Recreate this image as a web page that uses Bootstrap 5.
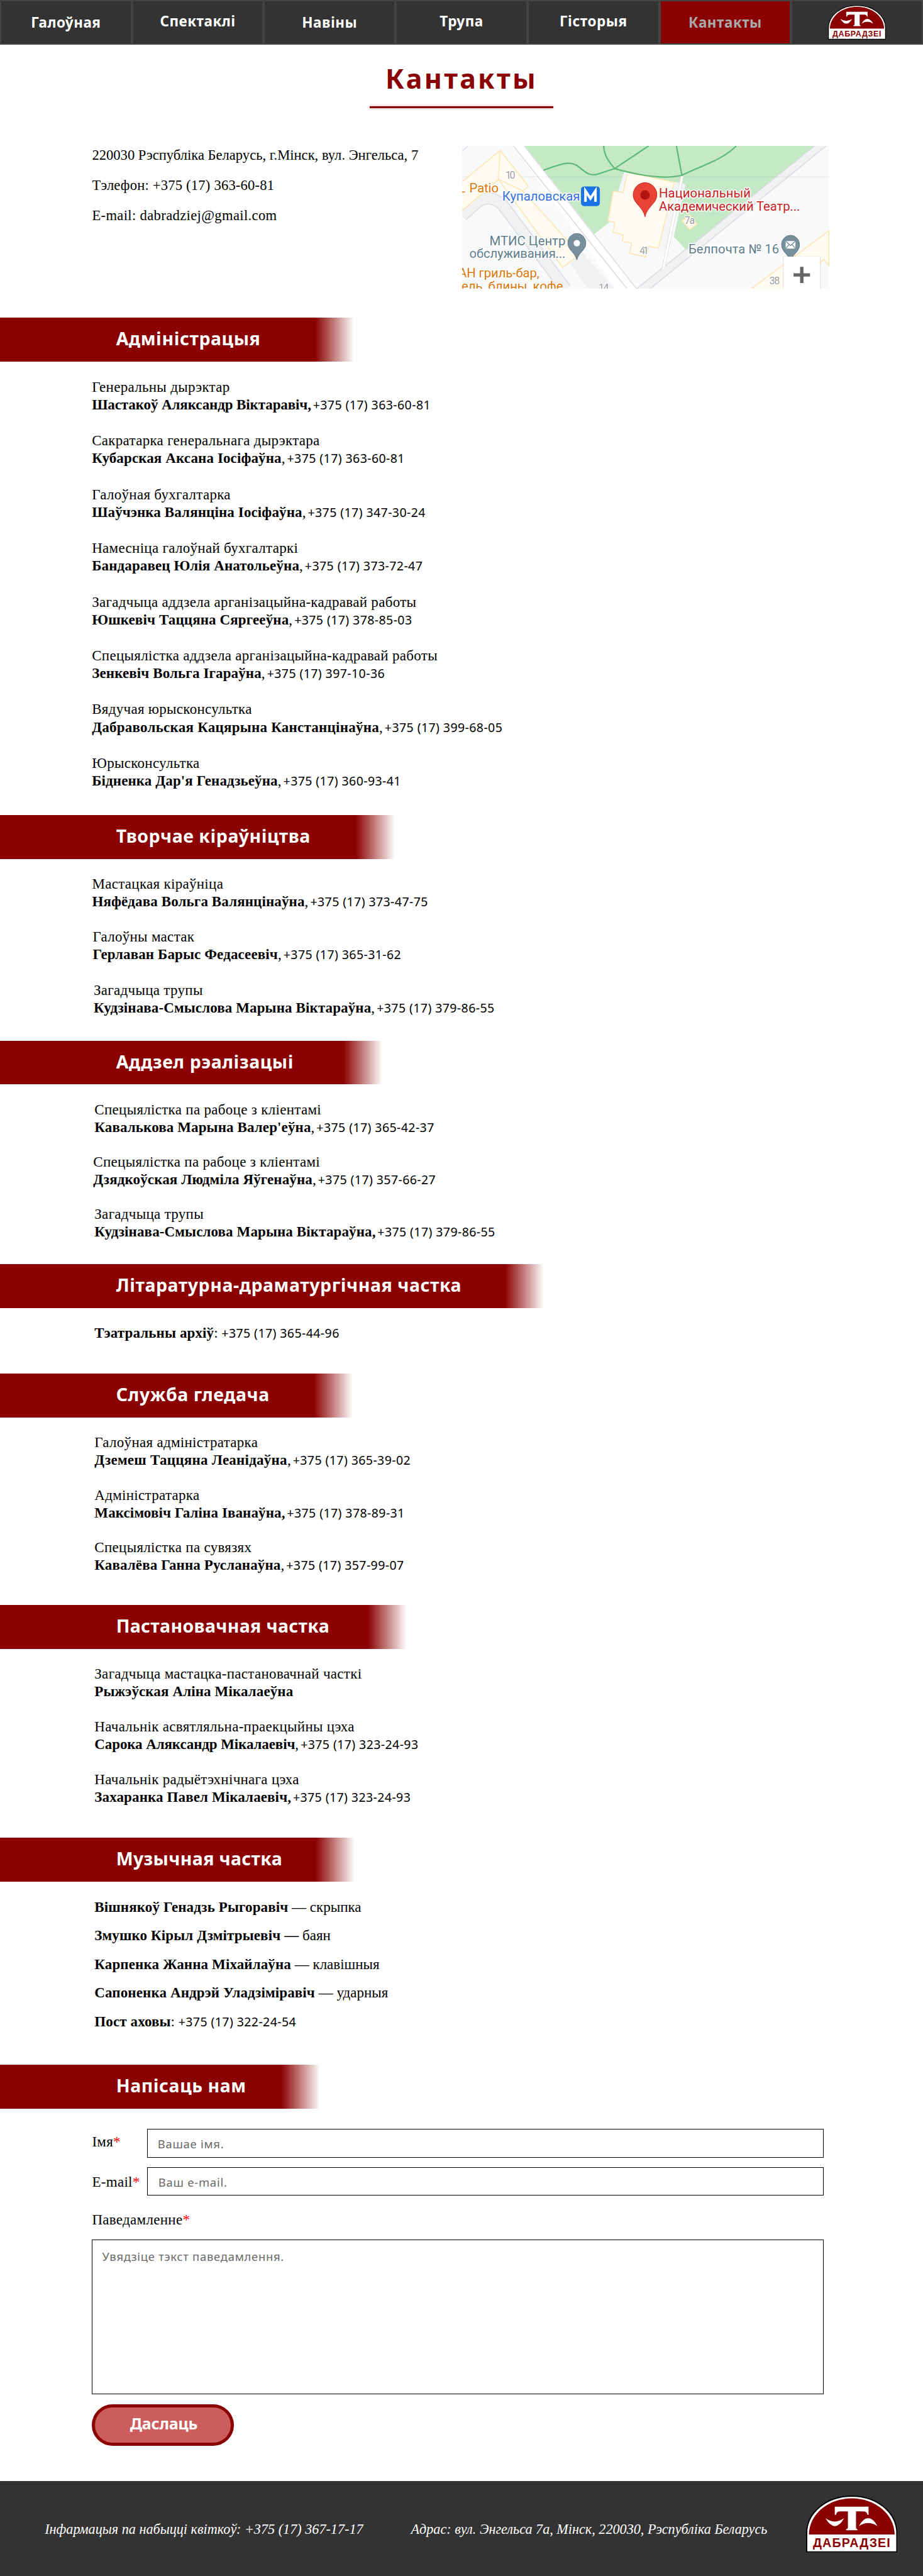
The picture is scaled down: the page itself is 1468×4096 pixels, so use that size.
<!DOCTYPE html>
<html lang="be">
<head>
<meta charset="utf-8">
<meta name="viewport" content="width=device-width, initial-scale=1">
<title>Кантакты</title>
<link href="https://cdn.jsdelivr.net/npm/bootstrap@5.3.0/dist/css/bootstrap.min.css" rel="stylesheet">
<style>
:root{--maroon:#8b0000;--ink:#333;--sans:"Noto Sans","Open Sans",sans-serif;--serif:"Liberation Serif",serif}
body{font-family:var(--serif);font-size:23px;line-height:28px;color:#000;background:#fff;overflow-x:hidden}
.site-nav{height:70.5px;background:#444}
.site-nav .nav-link{flex:1 1 0;min-width:0;height:70.5px;border:2px solid #444;border-radius:0;background:var(--ink);color:#fff;font:bold 22.5px/1 var(--sans);letter-spacing:.5px;padding:1px 0 0}
.site-nav .nav-link.raised{padding-bottom:2px;padding-top:0}
.site-nav .nav-link.active{background:var(--maroon);color:#a9a9a9}
.nav-logo{width:92px;height:55px;margin-left:-1px}
.page-title{font:bold 43px/60px var(--sans);letter-spacing:3.3px;color:var(--maroon);margin:24.8px 0 0}
.title-rule{width:292px;height:3px;margin:13.7px auto 0;background:var(--maroon);box-shadow:0 0 4px rgba(139,0,0,.45)}
.contact-row{margin-top:60px;height:227.1px;padding-left:146.4px}
.address{width:588.9px;padding-top:1px;gap:20.2px;font-size:22.6px}
.address .phone{letter-spacing:.2px}
.address .mail{letter-spacing:.35px}
.map{width:583.3px;height:227.1px}
.block{height:var(--h)}
.block-first{margin-top:46.3px}
.banner{width:var(--w);height:69.6px;padding-left:184.7px;margin:0;color:#fff;font:bold 28.5px/67px var(--sans);letter-spacing:.55px;background:linear-gradient(to right,var(--maroon) calc(100% - 62px),rgba(139,0,0,0))}
.people{padding:26.6px 0 0 var(--x,150.3px);gap:calc(var(--pitch) - 56.2px)}
.person{line-height:28.1px;letter-spacing:.3px;white-space:nowrap}
.person b,.line b{letter-spacing:.12px}
.person.snug b{letter-spacing:-.1px}
.person.loose b{letter-spacing:.25px}
.person .dept{display:block}
.tel{font-family:var(--sans);font-size:19.5px;letter-spacing:.42px}
.comma{margin-right:-3.3px}
.line{line-height:28px}
#admin{--w:563.4px;--h:790.6px;--pitch:85.5px;--x:146.2px}
#creative{--w:628px;--h:358.8px;--pitch:84.2px;--x:146.4px}
#sales{--w:607.5px;--h:355.2px;--pitch:83.1px}
#literary{--w:865.4px;--h:174px;--pitch:84px}
#audience{--w:560.5px;--h:368px;--pitch:83.4px}
#staging{--w:646.5px;--h:370.5px;--pitch:83.8px}
#music{--w:564.4px;--h:360.5px;--pitch:73.8px}
#staging .banner,#music .banner{letter-spacing:.35px}
#write{--w:509.3px}
#creative .person:nth-child(2){margin-left:1px}
#creative .person:nth-child(3){margin-left:2.6px}
#sales .person:nth-child(2){margin-left:-2px}
.write-form{width:1164.1px;margin-left:146.4px;padding-top:32.7px}
.write-form .form-label{font-size:23px;line-height:28px;letter-spacing:.3px;margin:0}
.write-form i{font-style:normal;color:red}
.write-form .form-control{border:1px solid #000;border-radius:0;font:18.4px/27px var(--sans);letter-spacing:.74px;padding:1px 16px 0}
.write-form .form-control::placeholder{color:#696969;opacity:1}
.short-label{width:87.4px;padding-top:6.8px}
.row-mail{margin-top:15.3px}
.row-mail .short-label{padding-top:9.3px}
.row-name .form-control{height:45.7px}
.row-mail .form-control{height:44.4px;padding-top:3px;padding-left:17px}
.message-label{margin-top:25.6px!important}
.write-form textarea.form-control{height:246.3px;margin-top:16.7px;padding:12.5px 15px;resize:none}
.btn-send{width:226px;height:65.7px;margin-top:15.9px;border:5.5px solid var(--maroon);border-radius:33px;background:#cd5c5c;color:#fff;font:bold 25px/1 var(--sans);letter-spacing:-.2px;padding:0 0 5px 2px}
.site-footer{height:151px;margin-top:56.1px;background:var(--ink);color:#fff;font-size:22.2px;font-style:italic;padding-left:71.2px}
.site-footer .info{width:582.3px}
.site-footer .info,.site-footer .addr{padding-top:3px}
.site-footer .addr{width:628.5px}
.foot-logo{width:145.4px;height:90.6px;margin-top:-14px}
</style>
<script src="https://cdn.jsdelivr.net/npm/bootstrap@5.3.0/dist/js/bootstrap.bundle.min.js"></script>
</head>
<body>
<svg width="0" height="0" class="d-none">
  <symbol id="logo" viewBox="80 80 452 281" preserveAspectRatio="none">
    <path d="M83 358V268C83 165 180 83 306 83S529 165 529 268V358Z" fill="#fff" stroke="#000" stroke-width="6"/>
    <path d="M94 272C96 172 190 94 306 94S516 172 518 272Z" fill="#8b0000"/>
    <path d="M222 135H389V175H384Q381 158 362 158H327V236Q327 246 334 246V251H278V246Q287 246 287 236V158H249Q231 158 228 175H222Z" fill="#fff"/>
    <path d="M176 192Q221 225 268 192Q247 231 222 231Q199 231 176 192Z" fill="#fff"/>
    <path d="M341 231Q363 192 387 192Q412 192 433 231Q387 200 341 231Z" fill="#fff"/>
    <text x="114" y="335" textLength="382" font-family="Liberation Sans" font-weight="bold" font-style="normal" font-size="61" fill="#8b0000">ДАБРАДЗЕІ</text>
  </symbol>
</svg>

<nav class="site-nav nav flex-nowrap">
  <a class="nav-link d-flex align-items-center justify-content-center">Галоўная</a>
  <a class="nav-link raised d-flex align-items-center justify-content-center">Спектаклі</a>
  <a class="nav-link d-flex align-items-center justify-content-center">Навіны</a>
  <a class="nav-link raised d-flex align-items-center justify-content-center">Трупа</a>
  <a class="nav-link raised d-flex align-items-center justify-content-center">Гісторыя</a>
  <a class="nav-link active d-flex align-items-center justify-content-center">Кантакты</a>
  <a class="nav-link d-flex align-items-center justify-content-center"><svg class="nav-logo"><use href="#logo"/></svg></a>
</nav>

<main>
  <h1 class="page-title text-center">Кантакты</h1>
  <div class="title-rule"></div>

  <div class="contact-row d-flex">
    <div class="address d-flex flex-column">
      <div>220030 Рэспубліка Беларусь, г.Мінск, вул. Энгельса, 7</div>
      <div class="phone">Тэлефон: +375 (17) 363-60-81</div>
      <div class="mail">E-mail: dabradziej@gmail.com</div>
    </div>
    <svg class="map" viewBox="0 0 603.6 235" preserveAspectRatio="none">
      <rect width="604" height="235" fill="#f8f9fb"/>
      <g transform="scale(.4968 .33333) translate(-42 -720)" fill="none" stroke-width="1.5">
        <g stroke="#dadce0">
          <path d="M42 745L62 720" vector-effect="non-scaling-stroke"/>
          <path d="M42 1065L95 995Q138 955 178 1015L385 1425" stroke="#dadce0" stroke-width="19" vector-effect="non-scaling-stroke"/>
          <path d="M42 1065L95 995Q138 955 178 1015L385 1425" stroke="#f0f1f3" stroke-width="16" vector-effect="non-scaling-stroke"/>
          <path d="M400 1300L440 1245L545 1425H460Z" fill="#f0f1f3" stroke="none"/>
          <path d="M212 720H248L620 1425H550Z" fill="#fff" stroke="none"/>
          <path d="M212 720L588 1425M248 720L620 1425" vector-effect="non-scaling-stroke"/>
          <path d="M1210 720H1250L665 1425H620Z" fill="#f0f1f3" stroke="none"/>
        </g>
        <path d="M250 720H1210L785 1235L743 1168L782 910L585 850L540 1085L480 1155Z" fill="#c5e8c5"/>
        <path d="M1210 720L620 1425M1248 720L665 1425" stroke="#dadce0" vector-effect="non-scaling-stroke"/>
        <path d="M42 873H1257" stroke="#000" stroke-opacity=".05" vector-effect="non-scaling-stroke"/>
        <path d="M745 900L782 910L720 1240H690Z" fill="#f3f4f6"/>
        <path d="M585 850L565 945" stroke="#f3f4f6" stroke-width="6" vector-effect="non-scaling-stroke"/>
        <g fill="#fffbf0" stroke="#fde5b0">
          <path d="M42 897L168 742L262 920L243 942L432 1255L375 1320L162 885L42 1040" vector-effect="non-scaling-stroke"/>
          <path d="M168 742L162 885L243 942" vector-effect="non-scaling-stroke"/>
          <path d="M590 850L745 900L692 1225L660 1215L650 1268L597 1250L603 1200L572 1190L577 1160L542 1145L548 1098L525 1090L543 943L575 950Z" vector-effect="non-scaling-stroke"/>
          <path d="M795 1060L820 1105L796 1133L771 1090Z" vector-effect="non-scaling-stroke"/>
          <path d="M1000 1425L1257 1138V1310L1240 1280L1140 1425" vector-effect="non-scaling-stroke"/>
        </g>
        <path d="M771 870L708 1330" stroke="#dadce0" stroke-width="5" vector-effect="non-scaling-stroke"/>
        <path d="M771 870L708 1330" stroke="#fff" stroke-width="3.4" vector-effect="non-scaling-stroke"/>
        <path d="M312 840C360 815 400 785 430 825S475 870 500 855L547 832C640 870 710 885 770 865C830 820 905 790 950 720M511 720C512 770 530 800 547 832L660 720M752 720L770 865" stroke="#5dba78" stroke-width="2.2" vector-effect="non-scaling-stroke"/>
      </g>
      <g font-family="Roboto, sans-serif" font-size="21" stroke="#fff" stroke-width="3" paint-order="stroke" stroke-linejoin="round">
        <g fill="#c5221f"><text x="324" y="85" textLength="151">Национальный</text><text x="324" y="106.7" textLength="232">Академический Театр...</text></g>
        <text x="66" y="90" textLength="128" fill="#3470e0">Купаловская</text>
        <g fill="#d9790b"><text x="-6" y="76.7">L</text><text x="12" y="76.7" textLength="48">Patio</text><text x="-6" y="216.7" textLength="133">АН гриль-бар,</text><text x="-1" y="238" textLength="167">ель, блины, кофе</text></g>
        <g fill="#607d8b"><text x="45" y="164" textLength="125">МТИС Центр</text><text x="12" y="184.5" textLength="158">обслуживания...</text><text x="372.6" y="177" textLength="149">Белпочта № 16</text></g>
        <g fill="#9aa0a6" font-size="16.5" stroke-width="2"><text x="71.5" y="54" textLength="16">10</text><text x="292" y="178" textLength="15">41</text><text x="366" y="128" textLength="17">7a</text><text x="505.7" y="228" textLength="17">38</text><text x="224.5" y="239" textLength="17">14</text></g>
      </g>
      <rect x="195.7" y="66.7" width="31" height="32.3" rx="5" fill="#1a73e8"/>
      <path d="M203 92V74L211.200 86.500L219.400 74V92" fill="none" stroke="#fff" stroke-width="4.200"/>
      <path d="M301 116.700C298 100 281.500 95 281.500 80.500A19.500 20 0 0 1 320.500 80.500C320.500 95 304 100 301 116.700Z" fill="#ea4335" stroke="#c5221f"/>
      <circle cx="301" cy="80.700" r="7.800" fill="#b31412"/>
      <g fill="#78909c" stroke="#5f7783">
        <path d="M188.800 187.500C186 175 174 172 174 159.500A14.800 15.500 0 0 1 203.600 159.500C203.600 172 191.500 175 188.800 187.500Z"/>
        <path d="M540.500 190.500C538 178 525.700 175 525.700 162.500A14.800 15.500 0 0 1 555.300 162.500C555.300 175 543 178 540.500 190.500Z"/>
      </g>
      <circle cx="188.800" cy="160" r="5.300" fill="#fff"/>
      <path d="M532.500 156.500H548.500V169H532.500Z" fill="#fff"/>
      <path d="M532.500 156.500L540.500 164L548.500 156.500M532.500 169L538 162M548.500 169L543 162" fill="none" stroke="#78909c" stroke-width="1.400"/>
      <rect x="528" y="181.500" width="62" height="60" rx="3" fill="#000" opacity=".1"/>
      <rect x="529" y="182" width="60" height="60" rx="2" fill="#fff"/>
      <path d="M545.400 212.300H572.600M559 199V225.600" stroke="#666" stroke-width="5.600"/>
    </svg>
  </div>

  <section id="admin" class="block block-first">
    <h2 class="banner">Адміністрацыя</h2>
    <div class="people d-flex flex-column">
      <div class="person snug"><span class="dept">Генеральны дырэктар</span><b>Шастакоў Аляксандр Віктаравіч<span class="comma">,</span></b> <span class="tel">+375 (17) 363-60-81</span></div>
      <div class="person"><span class="dept">Сакратарка генеральнага дырэктара</span><b>Кубарская Аксана Іосіфаўна</b><span class="comma">,</span> <span class="tel">+375 (17) 363-60-81</span></div>
      <div class="person"><span class="dept">Галоўная бухгалтарка</span><b>Шаўчэнка Валянціна Іосіфаўна</b><span class="comma">,</span> <span class="tel">+375 (17) 347-30-24</span></div>
      <div class="person"><span class="dept">Намесніца галоўнай бухгалтаркі</span><b>Бандаравец Юлія Анатольеўна</b><span class="comma">,</span> <span class="tel">+375 (17) 373-72-47</span></div>
      <div class="person"><span class="dept">Загадчыца аддзела арганізацыйна-кадравай работы</span><b>Юшкевіч Таццяна Сяргееўна</b><span class="comma">,</span> <span class="tel">+375 (17) 378-85-03</span></div>
      <div class="person"><span class="dept">Спецыялістка аддзела арганізацыйна-кадравай работы</span><b>Зенкевіч Вольга Ігараўна</b><span class="comma">,</span> <span class="tel">+375 (17) 397-10-36</span></div>
      <div class="person loose"><span class="dept">Вядучая юрысконсультка</span><b>Дабравольская Кацярына Канстанцінаўна</b><span class="comma">,</span> <span class="tel">+375 (17) 399-68-05</span></div>
      <div class="person"><span class="dept">Юрысконсультка</span><b>Бідненка Дар'я Генадзьеўна</b><span class="comma">,</span> <span class="tel">+375 (17) 360-93-41</span></div>
    </div>
  </section>

  <section id="creative" class="block">
    <h2 class="banner">Творчае кіраўніцтва</h2>
    <div class="people d-flex flex-column">
      <div class="person"><span class="dept">Мастацкая кіраўніца</span><b>Няфёдава Вольга Валянцінаўна</b><span class="comma">,</span> <span class="tel">+375 (17) 373-47-75</span></div>
      <div class="person"><span class="dept">Галоўны мастак</span><b>Герлаван Барыс Федасеевіч</b><span class="comma">,</span> <span class="tel">+375 (17) 365-31-62</span></div>
      <div class="person"><span class="dept">Загадчыца трупы</span><b>Кудзінава-Смыслова Марына Віктараўна</b><span class="comma">,</span> <span class="tel">+375 (17) 379-86-55</span></div>
    </div>
  </section>

  <section id="sales" class="block">
    <h2 class="banner">Аддзел рэалізацыі</h2>
    <div class="people d-flex flex-column">
      <div class="person"><span class="dept">Спецыялістка па рабоце з кліентамі</span><b>Кавалькова Марына Валер'еўна</b><span class="comma">,</span> <span class="tel">+375 (17) 365-42-37</span></div>
      <div class="person"><span class="dept">Спецыялістка па рабоце з кліентамі</span><b>Дзядкоўская Людміла Яўгенаўна</b><span class="comma">,</span> <span class="tel">+375 (17) 357-66-27</span></div>
      <div class="person"><span class="dept">Загадчыца трупы</span><b>Кудзінава-Смыслова Марына Віктараўна<span class="comma">,</span></b> <span class="tel">+375 (17) 379-86-55</span></div>
    </div>
  </section>

  <section id="literary" class="block">
    <h2 class="banner">Літаратурна-драматургічная частка</h2>
    <div class="people d-flex flex-column">
      <div class="line"><b>Тэатральны архіў</b>: <span class="tel">+375 (17) 365-44-96</span></div>
    </div>
  </section>

  <section id="audience" class="block">
    <h2 class="banner">Служба гледача</h2>
    <div class="people d-flex flex-column">
      <div class="person loose"><span class="dept">Галоўная адміністратарка</span><b>Дземеш Таццяна Леанідаўна</b><span class="comma">,</span> <span class="tel">+375 (17) 365-39-02</span></div>
      <div class="person"><span class="dept">Адміністратарка</span><b>Максімовіч Галіна Іванаўна<span class="comma">,</span></b> <span class="tel">+375 (17) 378-89-31</span></div>
      <div class="person"><span class="dept">Спецыялістка па сувязях</span><b>Кавалёва Ганна Русланаўна</b><span class="comma">,</span> <span class="tel">+375 (17) 357-99-07</span></div>
    </div>
  </section>

  <section id="staging" class="block">
    <h2 class="banner">Пастановачная частка</h2>
    <div class="people d-flex flex-column">
      <div class="person"><span class="dept">Загадчыца мастацка-пастановачнай часткі</span><b>Рыжэўская Аліна Мікалаеўна</b></div>
      <div class="person snug"><span class="dept">Начальнік асвятляльна-праекцыйны цэха</span><b>Сарока Аляксандр Мікалаевіч</b><span class="comma">,</span> <span class="tel">+375 (17) 323-24-93</span></div>
      <div class="person"><span class="dept">Начальнік радыётэхнічнага цэха</span><b>Захаранка Павел Мікалаевіч<span class="comma">,</span></b> <span class="tel">+375 (17) 323-24-93</span></div>
    </div>
  </section>

  <section id="music" class="block">
    <h2 class="banner">Музычная частка</h2>
    <div class="people d-flex flex-column">
      <div class="line"><b>Вішнякоў Генадзь Рыгоравіч</b> — скрыпка</div>
      <div class="line"><b>Змушко Кірыл Дзмітрыевіч —</b> баян</div>
      <div class="line"><b>Карпенка Жанна Міхайлаўна</b> — клавішныя</div>
      <div class="line"><b>Сапоненка Андрэй Уладзіміравіч</b> — ударныя</div>
      <div class="line"><b>Пост аховы</b>: <span class="tel">+375 (17) 322-24-54</span></div>
    </div>
  </section>

  <section id="write">
    <h2 class="banner">Напісаць нам</h2>
    <form class="write-form">
      <div class="row-name d-flex">
        <label class="form-label short-label flex-shrink-0">Імя<i>*</i></label>
        <input class="form-control" placeholder="Вашае імя.">
      </div>
      <div class="row-mail d-flex">
        <label class="form-label short-label flex-shrink-0">E-mail<i>*</i></label>
        <input class="form-control" placeholder="Ваш e-mail.">
      </div>
      <label class="form-label message-label d-block">Паведамленне<i>*</i></label>
      <textarea class="form-control" placeholder="Увядзіце тэкст паведамлення."></textarea>
      <button type="button" class="btn btn-send d-block">Даслаць</button>
    </form>
  </section>
</main>

<footer class="site-footer d-flex align-items-center">
  <div class="info text-nowrap">Інфармацыя па набыцці квіткоў: +375 (17) 367-17-17</div>
  <div class="addr text-nowrap">Адрас: вул. Энгельса 7а, Мінск, 220030, Рэспубліка Беларусь</div>
  <svg class="foot-logo flex-shrink-0"><use href="#logo"/></svg>
</footer>
</body>
</html>
